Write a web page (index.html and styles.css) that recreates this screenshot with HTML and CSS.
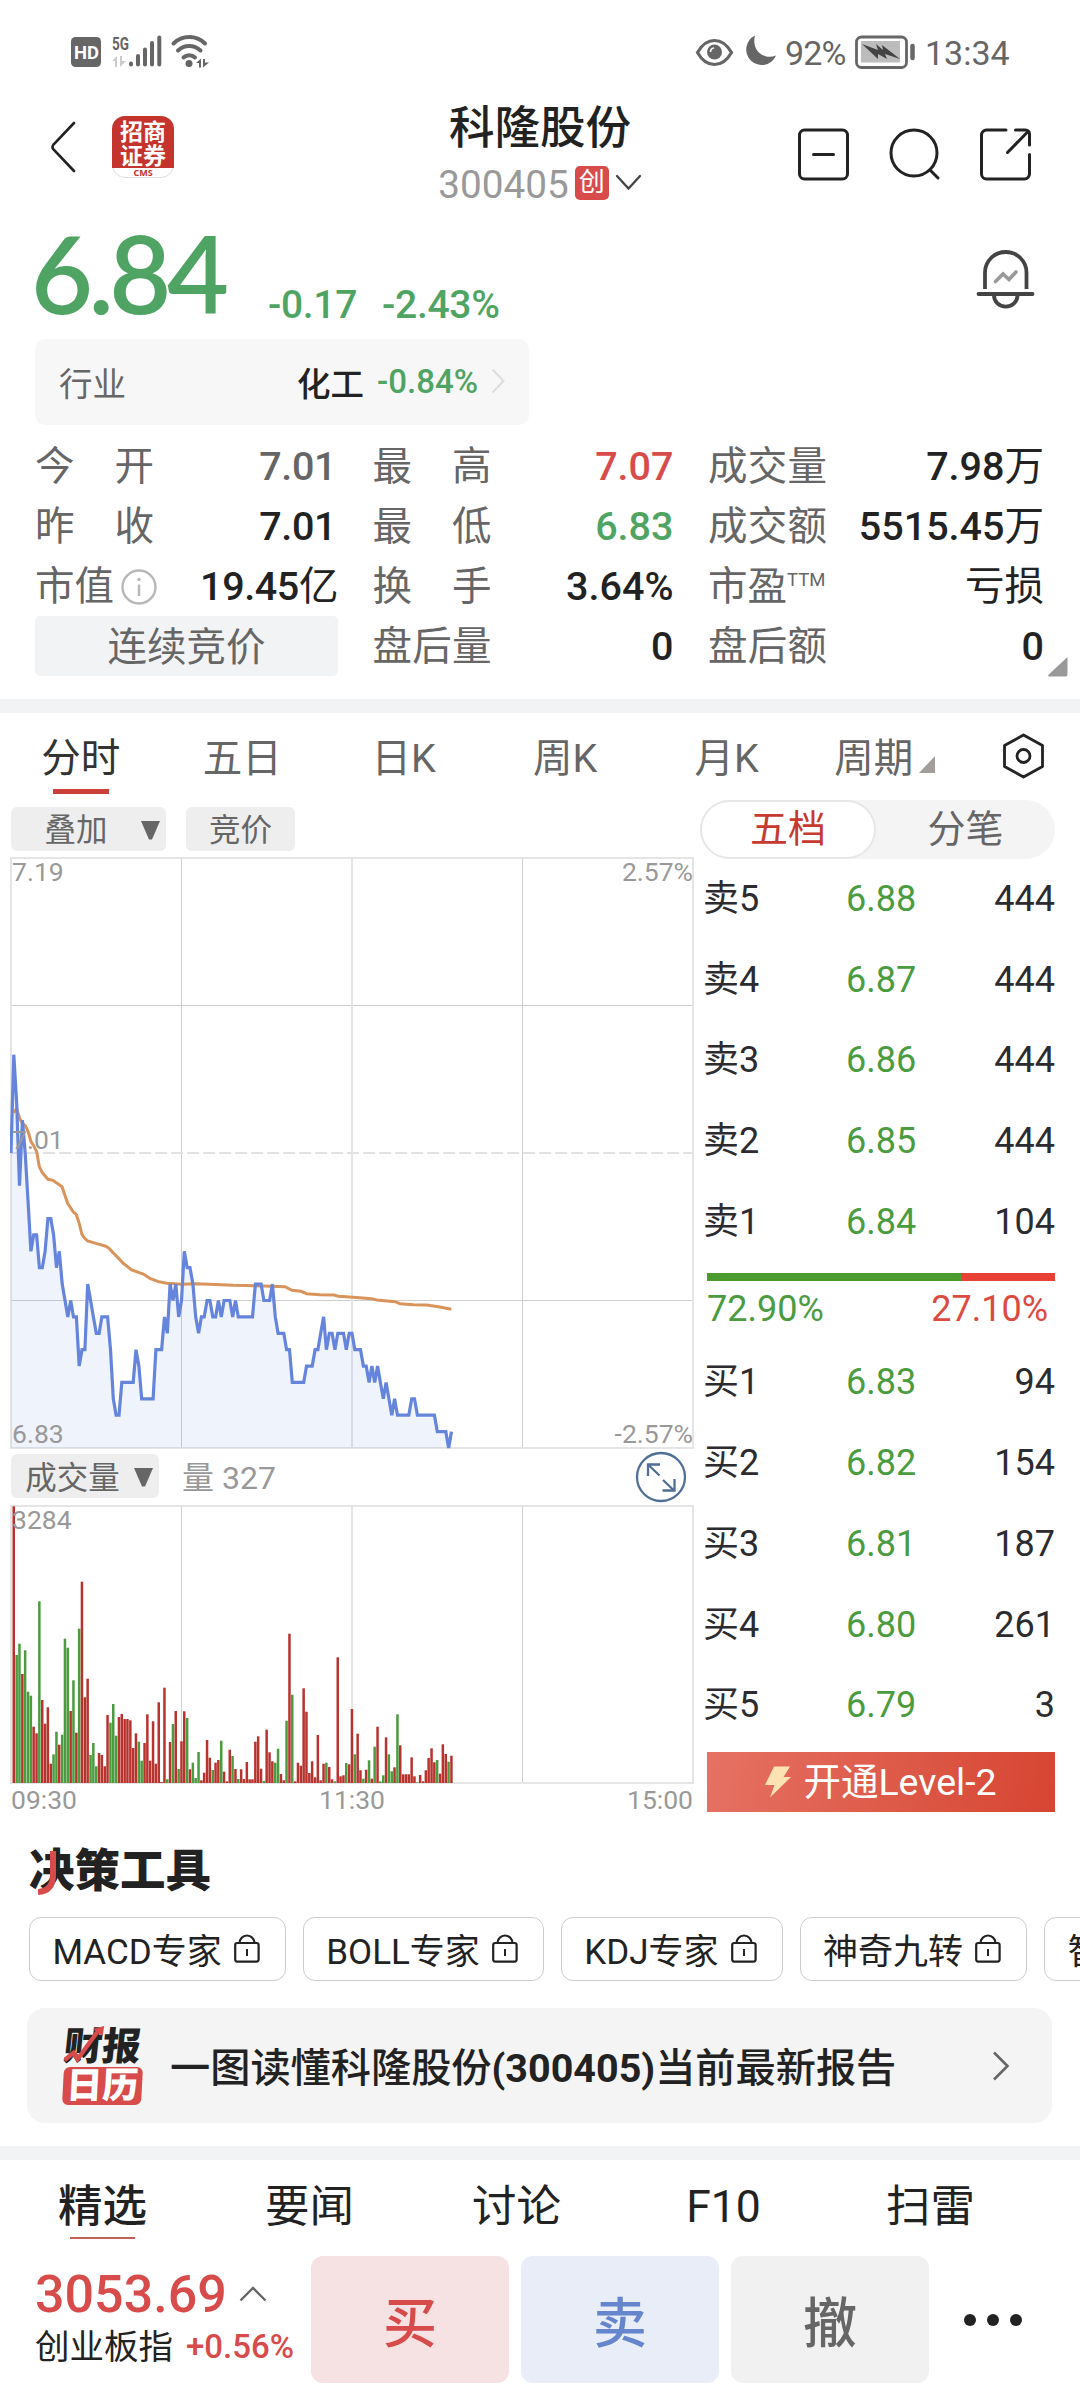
FILE: index.html
```html
<!DOCTYPE html>
<html lang="zh-CN">
<head>
<meta charset="utf-8">
<title>科隆股份 300405</title>
<link rel="stylesheet" href="styles.css">
</head>
<body>
<svg class="defs" aria-hidden="true">
  <symbol id="lock" viewBox="0 0 26 30"><path d="M5.500 10.500a7.500 8 0 0 1 15 0" fill="none" stroke="#222" stroke-width="2.200"/><rect x="1.200" y="10" width="23.400" height="18.600" rx="2" fill="none" stroke="#222" stroke-width="2.200"/><path d="M13 16v7" stroke="#222" stroke-width="2"/></symbol>
</svg>

<div class="status">
  <div class="status-left">
    <svg width="140" height="34" viewBox="70 35 140 34">
      <rect x="71" y="38" width="30" height="30" rx="4.500" fill="#666"/>
      <text x="74" y="60" class="hd" textLength="25" lengthAdjust="spacingAndGlyphs">HD</text>
      <text x="112" y="50.500" class="g5" textLength="17" lengthAdjust="spacingAndGlyphs">5G</text>
      <path d="M112 62l5-5v11h-2v-6zM120 57v11l6-6h-4v-5z" fill="#ccc"/>
      <g stroke="#666" stroke-width="4" stroke-linecap="round"><path d="M131 64.500v1M138 57v8.500M145 50.500v15M152 44v21.500M159.300 38.500v27"/></g>
      <g fill="none" stroke="#666" stroke-width="4" stroke-linecap="round"><path d="M173.500 44.500a22.500 22.500 0 0 1 31.500 0M178 51.500a16 16 0 0 1 22.500 0M183.500 58.500a8.500 8.500 0 0 1 11.500 0"/></g>
      <circle cx="189" cy="64.500" r="3.500" fill="#666"/>
      <path d="M196 64l5-4.500v9h-2v-4.500zM203 60v8.500l6-5h-4v-3.500z" fill="#666"/>
    </svg>
  </div>
  <div class="status-right">
    <svg width="82" height="34" viewBox="694 36 82 34">
      <path d="M697.500 53.500c9-16 25-16 34 0c-9 16-25 16-34 0z" fill="none" stroke="#666" stroke-width="3.200"/>
      <circle cx="714.500" cy="53" r="7.500" fill="#666"/><path d="M710.500 53a4 4 0 0 1 3.500-4" fill="none" stroke="#fff" stroke-width="1.600"/>
      <path d="M755 36.500a15.500 15.500 0 1 0 21 20c-12 5-25-5-21-20z" fill="#666"/>
    </svg>
    <span class="pct">92%</span>
    <svg width="62" height="34" viewBox="854 36 62 34">
      <rect x="856.500" y="38" width="50" height="30.500" rx="5" fill="none" stroke="#666" stroke-width="2.800"/>
      <rect x="861" y="42" width="39" height="21.500" fill="#bcbcbc"/>
      <path d="M862 45l16 6-2-6 7 6-1-5 18 14-15-5 2 5-9-5v5z" fill="#444"/>
      <path d="M912.500 47v12" stroke="#666" stroke-width="4.500" stroke-linecap="round"/>
    </svg>
    <span>13:34</span>
  </div>
</div>

<header class="top">
  <div class="top-left">
    <svg width="26" height="54" viewBox="0 0 26 54"><path d="M24 3L3.500 24.500q-2 2.500 0 5L24 51" fill="none" stroke="#222" stroke-width="2.600" stroke-linecap="round"/></svg>
    <div class="brand"><div class="brand-name">招商<br>证券</div><div class="brand-sub">CMS</div></div>
  </div>
  <div class="name">
    <h1>科隆股份</h1>
    <div class="code"><span>300405</span><b>创</b><svg width="27" height="18" viewBox="0 0 27 18"><path d="M2 2l11.500 12.500L25 2" fill="none" stroke="#444" stroke-width="2.300" stroke-linecap="round"/></svg></div>
  </div>
  <div class="top-right">
    <svg width="52" height="54" viewBox="0 0 52 54"><rect x="1.500" y="2" width="48" height="49" rx="5" fill="none" stroke="#222" stroke-width="3"/><path d="M15.500 26.500h20" stroke="#222" stroke-width="3" stroke-linecap="round"/></svg>
    <svg width="52" height="54" viewBox="0 0 52 54"><circle cx="25" cy="25" r="23" fill="none" stroke="#222" stroke-width="3"/><path d="M41 42l8 8" stroke="#222" stroke-width="3" stroke-linecap="round"/></svg>
    <svg width="52" height="54" viewBox="0 0 52 54"><path d="M26 2H6.500a5 5 0 0 0-5 5v39a5 5 0 0 0 5 5h38a5 5 0 0 0 5-5V26.500M35.500 2h10a4 4 0 0 1 4 4v11M48 3.500L27.500 24.500" fill="none" stroke="#222" stroke-width="3" stroke-linecap="round"/></svg>
  </div>
</header>

<section class="quote">
  <div class="price">6.84</div>
  <div class="delta"><span>-0.17</span><span>-2.43%</span></div>
  <svg class="bell" width="60" height="62" viewBox="0 0 60 62"><path d="M9 42V25.500a20.750 20.500 0 0 1 41.500 0v16.500" fill="none" stroke="#444" stroke-width="3.800"/><path d="M2.500 47h54" stroke="#444" stroke-width="3.800" stroke-linecap="round"/><path d="M18 48.500a11.500 10.800 0 0 0 23.500 0" fill="none" stroke="#444" stroke-width="3.800"/><path d="M19.500 34.500l7.500-7.500 6 5.500 7-7.500" fill="none" stroke="#999" stroke-width="3.600" stroke-linecap="round"/></svg>
</section>

<div class="industry">
  <span class="muted">行业</span><span class="sector">化工</span><span class="green">-0.84%</span>
  <svg width="14" height="26" viewBox="0 0 14 26"><path d="M1.500 1.500L12.500 13 1.500 24.500" fill="none" stroke="#ddd" stroke-width="2"/></svg>
</div>

<section class="stats">
  <div class="stat"><label>今 开</label><span class="muted">7.01</span></div>
  <div class="stat"><label>最 高</label><span class="red">7.07</span></div>
  <div class="stat"><label>成交量</label><span>7.98<i>万</i></span></div>
  <div class="stat"><label>昨 收</label><span>7.01</span></div>
  <div class="stat"><label>最 低</label><span class="green">6.83</span></div>
  <div class="stat"><label>成交额</label><span>5515.45<i>万</i></span></div>
  <div class="stat"><label class="free">市值<svg width="36" height="38" viewBox="0 0 36 38"><circle cx="18" cy="19" r="16.500" fill="none" stroke="#b8b8b8" stroke-width="2.400"/><path d="M18 16.500v11.500" stroke="#b8b8b8" stroke-width="2.500"/><circle cx="18" cy="11.500" r="1.700" fill="#b8b8b8"/></svg></label><span class="flush">19.45<i>亿</i></span></div>
  <div class="stat"><label>换 手</label><span>3.64%</span></div>
  <div class="stat"><label class="free">市盈<sup>TTM</sup></label><span><i>亏损</i></span></div>
  <div class="auction">连续竞价</div>
  <div class="stat"><label>盘后量</label><span>0</span></div>
  <div class="stat"><label>盘后额</label><span>0</span></div>
  <svg class="corner" width="20" height="20" viewBox="0 0 20 20"><path d="M19.500 0v17.500a2 2 0 0 1-2 2H1a1 1 0 0 1-.5-1.700z" fill="#999"/></svg>
</section>

<div class="band"></div>

<nav class="periods">
  <span class="active">分时</span><span>五日</span><span>日K</span><span>周K</span><span>月K</span><span class="more">周期<svg width="16" height="17" viewBox="0 0 16 17"><path d="M16 0v17H0z" fill="#a29d9b"/></svg></span>
  <svg class="gear" width="42" height="46" viewBox="0 0 42 46"><path d="M20.500 2L39.500 12.500V33.500L20.500 44 1.500 33.500V12.500z" fill="none" stroke="#222" stroke-width="2.800" stroke-linejoin="round"/><circle cx="20.500" cy="23" r="6.500" fill="none" stroke="#222" stroke-width="2.800"/></svg>
</nav>

<main class="market">
  <section class="charts">
    <div class="tools">
      <button class="pill overlay">叠加<svg width="19" height="19" viewBox="0 0 19 19"><path d="M0 0h19L11 18.500h-3z" fill="#666"/></svg></button>
      <button class="pill">竞价</button>
    </div>
    <svg class="plot" id="price" width="684" height="592" viewBox="-1 -1 684 592">
      <path d="M0 147.500H682M0 442.500H682M170.500 0V590M511.500 0V590" stroke="#cfcfcf" fill="none"/>
      <path d="M0 0H682V590H0zM341 0V590" stroke="#e5e5e5" stroke-width="2" fill="none"/>
      <path d="M0 295H682" stroke="#e2e2e2" stroke-width="2" stroke-dasharray="12 4" fill="none"/>
      <path id="area" fill="#6487de" fill-opacity=".1"/>
      <g transform="translate(-11 142) scale(.33333)"><polyline points="41,338 50,326 59,355 67,370 76,377 84,394 93,425 101,437 110,455 118,500 127,518 144,538 159,541 186,560 203,610 220,636 229,644 237,668 246,704 254,715 263,723 290,731 315,738 325,743 370,790 395,810 430,822 450,835 475,845 500,850 544,853 590,851 700,856 790,858 855,860 876,871 903,874 920,881 960,884 1003,885 1015,889 1060,892 1115,896 1130,900 1185,905 1200,911 1240,914 1280,915 1320,921 1354,928" fill="none" stroke="#d9945c" stroke-width="9"/></g>
      <polyline id="line" fill="none" stroke="#6585dc" stroke-width="3.200"/>
      <g class="axis"><text x="1" y="23">7.19</text><text x="1" y="291">7.01</text><text x="1" y="585">6.83</text><text x="682" y="23" text-anchor="end">2.57%</text><text x="682" y="585" text-anchor="end">-2.57%</text></g>
    </svg>
    <div class="vol-head">
      <button class="pill vol">成交量<svg width="19" height="19" viewBox="0 0 19 19"><path d="M0 0h19L11 18.500h-3z" fill="#666"/></svg></button>
      <span>量 327</span>
      <svg class="expand" width="52" height="52" viewBox="0 0 52 52"><g fill="none" stroke="#4f6f96" stroke-width="2.300"><circle cx="26" cy="26" r="24"/><path d="M24.500 24.500L13 13.500M13 25V13.500h12M28 29l11 10.500M27.500 39.500H39.500V28"/></g></svg>
    </div>
    <svg class="plot" id="volume" width="684" height="279" viewBox="-1 -1 684 279">
      <path d="M170.500 0V277M511.500 0V277" stroke="#cfcfcf" fill="none"/>
      <path d="M0 0H682V277H0zM341 0V277" stroke="#e5e5e5" stroke-width="2" fill="none"/>
      <g id="bars"></g>
      <text class="axis" x="1" y="22.500">3284</text>
    </svg>
    <div class="times"><span>09:30</span><span>11:30</span><span>15:00</span></div>
  </section>

  <aside class="book">
    <div class="segment"><span class="on">五档</span><span>分笔</span></div>
    <div class="level"><span>卖5</span><em>6.88</em><span>444</span></div>
    <div class="level"><span>卖4</span><em>6.87</em><span>444</span></div>
    <div class="level"><span>卖3</span><em>6.86</em><span>444</span></div>
    <div class="level"><span>卖2</span><em>6.85</em><span>444</span></div>
    <div class="level"><span>卖1</span><em>6.84</em><span>104</span></div>
    <div class="ratio"><div class="ratio-sell" style="width:72.9%"></div></div>
    <div class="ratio-text"><span class="sell">72.90%</span><span class="buy">27.10%</span></div>
    <div class="level"><span>买1</span><em>6.83</em><span>94</span></div>
    <div class="level"><span>买2</span><em>6.82</em><span>154</span></div>
    <div class="level"><span>买3</span><em>6.81</em><span>187</span></div>
    <div class="level"><span>买4</span><em>6.80</em><span>261</span></div>
    <div class="level"><span>买5</span><em>6.79</em><span>3</span></div>
    <div class="level2"><svg width="26" height="32" viewBox="0 0 26 32"><path d="M9 .5h16L18.500 11H26L5 31.500 9.500 19H0z" fill="#fde3b4"/></svg>开通Level-2</div>
  </aside>
</main>

<section class="experts">
  <h2>决策工具<svg width="20" height="44" viewBox="0 0 20 44"><path d="M15 0V24Q15 40 0 41" fill="none" stroke="#d84b4b" stroke-width="6"/></svg></h2>
  <div class="chips">
    <span>MACD专家<svg width="26" height="30"><use href="#lock"/></svg></span>
    <span>BOLL专家<svg width="26" height="30"><use href="#lock"/></svg></span>
    <span>KDJ专家<svg width="26" height="30"><use href="#lock"/></svg></span>
    <span>神奇九转<svg width="26" height="30"><use href="#lock"/></svg></span>
    <span>智</span>
  </div>
  <div class="report">
    <div class="cal"><div class="cal-top">财报<svg width="38" height="36" viewBox="0 0 38 36"><path d="M1 34l8-7 5 6L32 4" fill="none" stroke="#d84b4b" stroke-width="4.500"/><path d="M26 3L37 0l-.5 10z" fill="#d84b4b"/></svg></div><div class="cal-bottom">日历</div></div>
    <p>一图读懂科隆股份<b>(300405)</b>当前最新报告</p>
    <svg width="18" height="30" viewBox="0 0 18 30"><path d="M2 1.500L15.500 15 2 28.500" fill="none" stroke="#666" stroke-width="2.600"/></svg>
  </div>
</section>

<div class="band"></div>

<nav class="news"><span class="active">精选</span><span>要闻</span><span>讨论</span><span>F10</span><span>扫雷</span></nav>

<footer class="dock">
  <div class="index">
    <div class="index-value">3053.69<svg width="28" height="16" viewBox="0 0 28 16"><path d="M1.500 14.500L14 2l12.500 12.500" fill="none" stroke="#666" stroke-width="2.400"/></svg></div>
    <div class="index-name">创业板指<b>+0.56%</b></div>
  </div>
  <div class="act act-buy">买</div>
  <div class="act act-sell">卖</div>
  <div class="act act-undo">撤</div>
  <svg width="60" height="14" viewBox="0 0 60 14"><g fill="#222"><circle cx="7" cy="7" r="6"/><circle cx="30" cy="7" r="6"/><circle cx="53" cy="7" r="6"/></g></svg>
</footer>
<script src="chart.js"></script>
</body>
</html>
```
FILE: styles.css
```css
* { box-sizing: border-box; margin: 0; padding: 0; }
body { width: 1080px; height: 2400px; overflow: hidden; background: #fff; color: #222; font-family: Roboto, "Noto Sans CJK SC", sans-serif; display: flex; flex-direction: column; }
body > * { flex: none; }
svg { display: block; flex: none; }
.defs { position: absolute; width: 0; height: 0; }
i, em { font-style: normal; }
.muted { color: #666; }
.red { color: #d84b4b !important; }
.green { color: #4fa464 !important; }

.status { height: 104px; padding: 0 70px; display: flex; justify-content: space-between; color: #666; font-size: 34px; line-height: 40px; }
.status-left { padding-top: 34px; }
.status-right { padding-top: 35px; display: flex; }
.status-right span { margin-top: -2px; width: 85px; white-space: nowrap; }
.status-right .pct { width: 69px; margin-left: 9px; letter-spacing: -.8px; }
.status-right > svg:nth-of-type(2) { margin-right: 9px; }
.status-left svg { overflow: visible; }
.hd { font: 700 19px Roboto; fill: #fff; }
.g5 { font: 700 19px Roboto; fill: #666; }

.top { height: 112px; padding: 0 48px 0 50px; display: grid; grid-template-columns: 1fr 240px 1fr; }
.top-left { display: flex; gap: 36px; align-items: flex-start; padding-top: 12px; }
.top-left > svg { margin-top: 4px; }
.brand { width: 62px; height: 62px; border-radius: 13px; border: 1px solid #ddd; background: #fff; text-align: center; }
.brand-name { height: 52px; margin: -1px -1px 0; padding-top: 2px; border-radius: 13px 13px 0 0; background: #c4342d; color: #fff; font: 700 23px/24px "Noto Sans CJK SC", sans-serif; }
.brand-sub { color: #c4342d; font: 700 9px/9px "Open Sans", sans-serif; }
.name { text-align: center; margin-left: -2px; }
.name h1 { font-size: 45.500px; line-height: 50px; font-weight: 500; white-space: nowrap; }
.code { display: flex; align-items: center; justify-content: center; height: 60px; color: #999; font-size: 38.700px; }
.code b { width: 34px; height: 34px; margin: -2px 6px 0 6px; border-radius: 5px; background: #d84b4b; color: #fff; font-size: 26px; line-height: 33px; font-weight: 400; }
.code svg { margin-top: -3px; }
.top-right { display: flex; justify-content: flex-end; gap: 39px; padding-top: 24px; }

.quote { height: 123px; padding: 0 44px 0 31px; display: flex; }
.price { color: #4fa464; font-family: Lato, sans-serif; font-size: 107px; line-height: 114px; font-weight: 600; font-kerning: none; letter-spacing: -4.500px; width: 237px; white-space: nowrap; }
.delta { display: flex; gap: 25px; color: #4fa464; font-size: 39px; line-height: 46px; font-weight: 500; padding-top: 66px; letter-spacing: -.3px; }
.bell { margin-left: auto; margin-top: 31px; }

.industry { width: 494px; height: 86px; margin-left: 35px; padding: 0 24px 2px; display: flex; align-items: center; border-radius: 10px; background: #f7f7f7; font-size: 33.500px; }
.sector { margin-left: auto; margin-right: 13px; font-weight: 500; }
.industry .green { font-weight: 500; margin-right: 13px; font-size: 33px; }

.stats { position: relative; height: 274px; padding: 12px 36px 0 35px; display: grid; grid-template-columns: 303px 301px 336px; grid-auto-rows: 60px; column-gap: 34.500px; font-size: 39.500px; }
.stat { display: flex; justify-content: space-between; line-height: 60px; white-space: nowrap; font-weight: 500; }
.stat label { width: 119px; color: #666; text-align-last: justify; font-weight: 400; }
.stat label.free { width: auto; text-align-last: auto; display: flex; align-items: center; }
.stat label svg { margin-left: 7px; }
.stat i { font-weight: 400; }
.stat:nth-child(3n+1) > span { padding-right: 2px; letter-spacing: -.4px; }
.stat > .flush { padding-right: 0 !important; }
sup { font-size: 18.500px; line-height: 20px; margin-top: -14px; }
.auction { background: #f2f3f5; border-radius: 5px; height: 60px; color: #666; line-height: 64px; text-align: center; margin-top: -1px; }
.corner { position: absolute; left: 1048px; top: 232px; }
.band { height: 14px; background: #f2f3f5; }

.periods { height: 87px; display: flex; font-size: 39.500px; line-height: 91px; color: #666; }
.periods > span { width: 161.500px; text-align: center; position: relative; }
.periods .active { color: #333; }
.periods .active::after { content: ""; position: absolute; left: 53px; top: 76px; width: 56px; height: 5px; background: #cb4038; }
.periods .more { display: flex; justify-content: center; padding-right: 7px; gap: 6px; }
.more svg { margin-top: 43px; }
.gear { margin: 20px 0 0 34px; }

.market { height: 1032px; display: flex; justify-content: space-between; padding: 0 25px 0 10px; }
.charts { width: 684px; }
.tools { height: 57px; padding: 7px 0 0 1px; display: flex; gap: 20px; }
.pill { height: 44px; border: 0; border-radius: 6px; background: #eee; color: #666; font: 31.500px/48px Roboto, "Noto Sans CJK SC", sans-serif; width: 109px; display: flex; justify-content: center; align-items: flex-start; white-space: nowrap; }
.pill svg { margin-top: 14px; }
.overlay { width: 155px; gap: 33px; padding-left: 27px; }
.vol { width: 148px; gap: 14px; padding-left: 8px; line-height: 50px; }
.axis { font: 26.500px Roboto; fill: #999; }
.vol-head { height: 56px; padding: 5px 7px 0 1px; display: flex; color: #999; font-size: 32px; line-height: 49px; }
.vol-head > span { margin-left: 23px; }
.expand { margin: -3px 0 0 auto; }
.times { display: flex; justify-content: space-between; padding: 0 1px 0 1px; font-size: 26.500px; line-height: 32px; color: #999; }

.book { width: 348px; }
.segment { width: 355px; height: 59px; margin: 0 0 12px -7px; display: flex; border-radius: 30px; background: #f4f4f4; color: #666; font-size: 38px; line-height: 59px; text-align: center; }
.segment span { flex: 1; }
.segment .on { flex: none; width: 176px; line-height: 55px; background: #fff; border: 2px solid #e7e7e7; border-radius: 30px; color: #c63a30; }
.level { height: 80.700px; line-height: 57px; display: flex; font-size: 36px; margin-left: -4px; color: #2b2b30; }
.level span { width: 143px; white-space: nowrap; }
.level em { width: 80px; color: #4b9b3f; }
.level span:last-child { width: auto; margin-left: auto; }
.ratio { height: 8px; margin-top: -1px; background: #e84034; }
.ratio-sell { height: 8px; background: #4b9b2f; }
.ratio-text { display: flex; justify-content: space-between; height: 73px; padding-right: 7px; font-size: 36px; line-height: 57px; }
.sell { color: #4b9b3f; }
.buy { color: #dd4a42; }
.level2 { height: 60px; margin-top: -6px; background: linear-gradient(100deg, #e67264, #d64531); color: #fff; font-size: 37.500px; line-height: 62px; display: flex; justify-content: center; align-items: center; gap: 12px; }

.experts { height: 314px; padding-left: 29px; overflow: hidden; }
h2 { position: relative; height: 85px; font-size: 45.500px; font-weight: 900; line-height: 80px; }
h2 svg { position: absolute; left: 9px; top: 19px; }
.chips { display: flex; gap: 17px; height: 91px; white-space: nowrap; }
.chips span { flex: none; height: 64px; padding: 0 25px 2px 22.500px; display: flex; align-items: center; gap: 12px; border: 1.500px solid #ccc; border-radius: 12px; font-size: 35px; }
.report { width: 1025px; height: 115px; margin-left: -2px; padding: 0 42px 0 36px; display: flex; align-items: center; border-radius: 18px; background: #f4f4f4; }
.report p { font-size: 40.200px; font-weight: 500; margin: -3px auto 0 28px; white-space: nowrap; }
.report p b { font-weight: 700; font-size: 39.500px; }
.cal { width: 79px; height: 78px; font-weight: 900; }
.cal-top { position: relative; height: 40px; font-size: 38.500px; line-height: 40px; transform: skewX(-6deg); text-align: center; white-space: nowrap; }
.cal-top svg { position: absolute; left: 2px; top: -1px; }
.cal-bottom { height: 38px; background: #d84b4b; border-radius: 6px; color: #fff; font-size: 36px; line-height: 38px; text-align: center; transform: skewX(-3deg); }

.news { height: 96px; display: flex; font-size: 44.500px; line-height: 95px; }
.news span { width: 207px; text-align: center; position: relative; left: -1px; }
.news .active { font-weight: 500; }
.news .active::after { content: ""; position: absolute; left: 71px; top: 77px; width: 65px; height: 2px; background: #c4605a; }

.dock { height: 144px; padding-left: 35px; display: flex; gap: 12px; }
.index { width: 264px; padding-top: 9px; white-space: nowrap; }
.index-value { display: flex; gap: 12px; height: 56px; color: #d84b4b; font-size: 52px; line-height: 60px; font-weight: 500; }
.index-value svg { margin-top: 21px; }
.index-name { display: flex; gap: 13px; font-size: 34.500px; line-height: 52px; }
.index-name b { color: #d84b4b; font-weight: 500; font-size: 33px; }
.act { width: 198px; height: 127px; border-radius: 12px; text-align: center; font-size: 54px; line-height: 137px; font-weight: 500; }
.act-buy { background: #f7e2e3; color: #d84b4b; }
.act-sell { background: #e8edf7; color: #6585cc; }
.act-undo { background: #f1f1f1; color: #666; }
.dock > svg { margin: 57px 0 0 22px; }
```
FILE: chart.js
```js
// Intraday prices in cents above 6.83, one value a minute
const prices = [
  18,24,21,16,20,18,15,12,13,13,11,11,12,14,14,13,11,12,10,9,8,9,8,8,5,6,6,10,9,8,
  7,7,8,8,8,6,3,2,2,4,4,4,4,4,6,5,3,3,3,3,3,6,6,6,8,7,10,9,10,8,
  9,12,11,11,10,8,7,8,8,9,9,8,8,9,8,9,9,9,8,9,8,8,8,8,8,8,10,10,10,9,
  9,9,10,8,7,7,7,6,6,4,4,4,4,4,5,5,5,6,6,7,8,6,7,7,6,7,7,7,6,7,
  7,6,6,6,5,5,4,5,4,5,4,3,4,3,2,3,2,2,2,2,2,3,3,2,2,2,2,2,2,2,
  1,1,1,1,0,1
];
// Volume per minute on a scale where 830 fills the pane; negative marks a falling minute
const volumes = [
  830,-384,-418,327,-398,-274,-262,169,149,-545,249,178,227,58,-86,-154,115,-145,-433,-406,
  216,-308,151,-463,604,257,313,-84,-120,-50,90,84,50,204,-181,-237,-142,198,207,192,
  192,188,105,149,-124,-67,120,206,67,185,58,242,3,286,-11,123,-177,216,-42,125,
  215,-195,41,-61,-15,-93,8,31,129,76,-39,61,69,-127,34,5,100,-81,42,-12,
  41,12,63,11,11,124,140,43,-6,160,92,65,-61,-103,27,8,-187,448,-265,5,
  61,52,284,214,30,65,17,144,8,58,-61,48,11,-5,377,20,23,-60,56,222,
  -86,148,38,-13,40,-68,13,-109,169,-5,-23,137,-86,-35,47,-206,113,26,26,26,
  77,20,-2,24,5,38,75,104,62,-69,28,116,87,-64,82
];
const step = 682 / 240;
const pts = prices.map((p, i) => (i * step).toFixed(1) + ',' + (590 - p * 590 / 36).toFixed(1));
document.getElementById('line').setAttribute('points', pts.join(' '));
document.getElementById('area').setAttribute('d', 'M0,590L' + pts.join('L') + 'V590Z');
document.getElementById('bars').innerHTML = volumes.map((v, i) => {
  const h = Math.abs(v) / 3;
  return `<rect x="${((i + 1) * step - 1.3).toFixed(1)}" y="${(277 - h).toFixed(1)}" width="2.5" height="${h.toFixed(1)}" fill="${v < 0 ? '#4b9b3f' : '#b8332e'}"/>`;
}).join('');
```
